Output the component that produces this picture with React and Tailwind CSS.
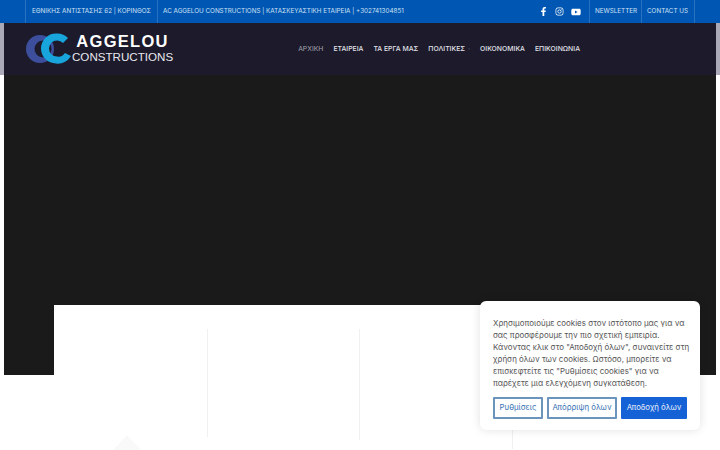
import { FaFacebookF, FaInstagram, FaYoutube, FaChevronDown } from "react-icons/fa"

const menu = ["ΑΡΧΙΚΗ", "ΕΤΑΙΡΕΙΑ", "ΤΑ ΕΡΓΑ ΜΑΣ", "ΠΟΛΙΤΙΚΕΣ", "ΟΙΚΟΝΟΜΙΚΑ", "ΕΠΙΚΟΙΝΩΝΙΑ"]

function Logo() {
  return (
    <div className="flex items-center">
      <svg width="46" height="32" viewBox="0 0 46 32" className="shrink-0">
        <path fillRule="evenodd" d="M14 2 A14 14 0 1 0 14 30 A14 14 0 1 0 14 2 Z M17 7.5 A8.5 8.5 0 1 0 17 24.5 A8.5 8.5 0 1 0 17 7.5 Z" fill="#3d4f9c" />
        <path d="M42 5 A15 15 0 0 0 30 0.5 A15 15 0 0 0 30 30.5 A15 15 0 0 0 45 23 L39 20 A8 8 0 0 1 31 23.5 A8 8 0 0 1 31 7.5 A8 8 0 0 1 37 10 Z" fill="#18a5dc" />
      </svg>
      <div className="flex flex-col items-center text-white font-['Liberation_Sans',sans-serif]">
        <span className="text-[16.5px] font-bold tracking-[1.3px] h-[15px] leading-[15px] -mt-[1px]">AGGELOU</span>
        <span className="text-[11.6px] text-[#e8e8ee] h-[13px] leading-[13px] mt-[1px]">CONSTRUCTIONS</span>
      </div>
    </div>
  )
}

function CookieBox() {
  return (
    <div className="absolute left-[480px] top-[301px] w-[220px] h-[129px] bg-white rounded-md shadow-[0_0_10px_rgba(0,0,0,0.12)] px-[13px] pt-[16px] font-['Inter',sans-serif]">
      <p className="text-[7.95px] leading-[12px] text-[#555] whitespace-nowrap">
        Χρησιμοποιούμε cookies στον ιστότοπο μας για να<br />
        σας προσφέρουμε την πιο σχετική εμπειρία.<br />
        Κάνοντας κλικ στο "Αποδοχή όλων", συναινείτε στη<br />
        χρήση όλων των cookies. Ωστόσο, μπορείτε να<br />
        επισκεφτείτε τις "Ρυθμίσεις cookies" για να<br />
        παρέχετε μια ελεγχόμενη συγκατάθεση.
      </p>
      <div className="flex gap-1 mt-[8px] text-[7.8px]">
        <button className="w-[50px] h-[22px] border-2 border-[#6a94bd] text-[#3a73b5] rounded-[1px]">Ρυθμίσεις</button>
        <button className="w-[70px] h-[22px] border-2 border-[#6a94bd] text-[#3a73b5] rounded-[1px]">Απόρριψη όλων</button>
        <button className="w-[66px] h-[22px] bg-[#1561d6] text-[#e6eefb] rounded-[1px]">Αποδοχή όλων</button>
      </div>
    </div>
  )
}

export default function App() {
  return (
    <div className="relative h-[450px] overflow-hidden bg-white font-['Inter',sans-serif]">
      {/* top bar */}
      <div className="flex items-center h-[23px] bg-[#0057b3] pl-[25px] pr-[25px] text-[6.3px] text-[#cfe0f5]">
        <div className="h-full flex items-center w-[133px] pl-[6px] border-x border-[#2a72bf] whitespace-nowrap">ΕΘΝΙΚΗΣ ΑΝΤΙΣΤΑΣΗΣ 62 | ΚΟΡΙΝΘΟΣ</div>
        <div className="h-full flex items-center pl-[5px] whitespace-nowrap">AC AGGELOU CONSTRUCTIONS | ΚΑΤΑΣΚΕΥΑΣΤΙΚΗ ΕΤΑΙΡΕΙΑ | +302741304851</div>
        <div className="ml-auto flex items-center gap-[7px] text-white text-[9px] mr-[8px]">
          <FaFacebookF />
          <FaInstagram />
          <FaYoutube className="text-[10px]" />
        </div>
        <div className="h-full flex items-center w-[53px] pl-[5px] border-x border-[#2a72bf]">NEWSLETTER</div>
        <div className="h-full flex items-center w-[53px] pl-[5px] border-r border-[#2a72bf]">CONTACT US</div>
      </div>

      {/* nav */}
      <div className="bg-[#aaa9b8] px-1">
        <div className="flex items-center h-[52px] bg-[#1c1a2b] pl-[22px]">
          <Logo />
          <nav className="flex items-center gap-[10px] ml-[125px] text-[6.85px] font-medium text-[#e2e2e9] whitespace-nowrap">
            {menu.map((m, i) => (
              <span key={m} className={i === 0 ? "text-[#a5a4ae] font-normal" : i === 3 ? "flex items-center gap-[3px]" : ""}>
                {m}
                {i === 3 && <FaChevronDown className="text-[2px] text-[#6b6a78]" />}
              </span>
            ))}
          </nav>
        </div>
      </div>

      {/* hero */}
      <div className="px-1">
        <div className="h-[300px] bg-[#1a1a1a]"></div>
      </div>
      <div className="relative -mt-[70px] ml-[54px] mr-[54px] h-[145px] bg-white">
        <div className="grid grid-cols-[154px_152px_153px] pt-[24px] h-full">
          <div className="h-[108px] border-r border-[#f0f0f0]"></div>
          <div className="h-[111px] border-r border-[#f0f0f0]"></div>
          <div className="h-[120px] border-r border-[#f0f0f0]"></div>
        </div>
        <svg width="28" height="15" viewBox="0 0 28 15" className="absolute left-[59px] top-[130px]">
          <path d="M14 0 L28 15 L0 15 Z" fill="#f9f9f9" />
        </svg>
      </div>

      <CookieBox />
    </div>
  )
}
